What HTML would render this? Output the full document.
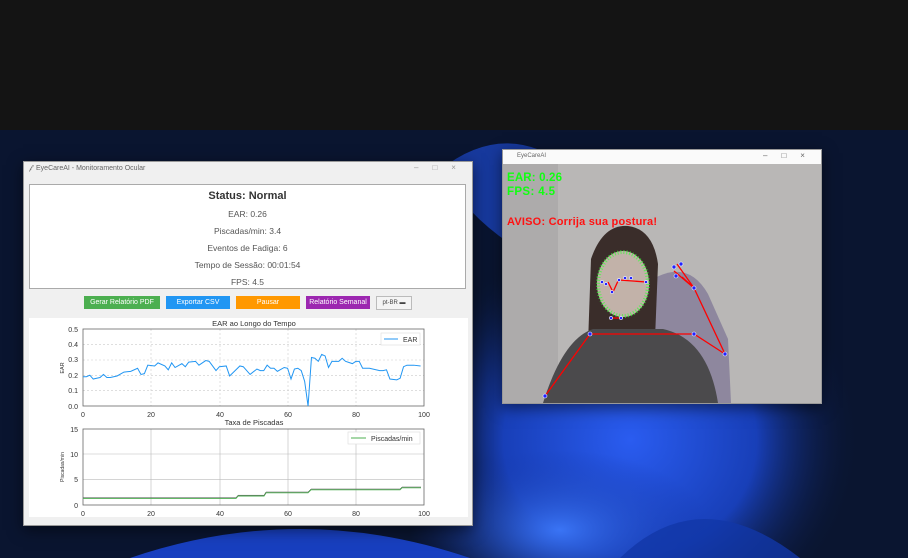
<!DOCTYPE html>
<html><head><meta charset="utf-8"><style>
html,body{margin:0;width:908px;height:558px;overflow:hidden}
body{background:#0a1633;font-family:"Liberation Sans",sans-serif;position:relative}
.abs{position:absolute}
.win{position:absolute;background:#f0f0f0;border:1px solid #999;box-shadow:0 4px 14px rgba(0,0,0,.5);box-sizing:border-box}
.tb{font-size:7px;color:#666}
.info{position:absolute;left:5px;top:22px;width:437px;height:105px;background:#fff;border:1px solid #aaa;text-align:center;color:#555;font-size:8.5px;box-sizing:border-box}
.info div{position:absolute;left:0;right:0}
.btn{position:absolute;top:134px;height:13px;color:#fff;font-size:7px;text-align:center;line-height:13px}
</style></head><body>
<div class="abs" style="left:0;top:0;width:908px;height:130px;background:#141414"></div>
<svg class="abs" style="left:0;top:130px" width="908" height="428">
<defs>
<radialGradient id="g1" cx="50%" cy="50%" r="50%"><stop offset="0" stop-color="#2a5cf0"/><stop offset=".55" stop-color="#183fb8"/><stop offset="1" stop-color="#0a1633" stop-opacity="0"/></radialGradient>
<radialGradient id="g2" cx="50%" cy="50%" r="50%"><stop offset="0" stop-color="#3a74f5"/><stop offset="1" stop-color="#1436a8" stop-opacity="0"/></radialGradient>
</defs>
<rect width="908" height="428" fill="#0a1530"/>
<ellipse cx="630" cy="310" rx="230" ry="210" fill="url(#g1)"/>
<ellipse cx="560" cy="400" rx="150" ry="80" fill="url(#g2)"/>
<path d="M440 40 Q490 0 540 20 L520 120 Q470 90 440 40Z" fill="#1c48cc" opacity=".7"/>
<path d="M130 428 Q300 370 470 428Z" fill="#1a44cf" opacity=".9"/>
<path d="M620 428 Q700 350 800 428Z" fill="#1237a8" opacity=".8"/>
</svg>

<!-- camera window -->
<div class="win" style="left:502px;top:149px;width:320px;height:255px;background:#fafafa">
<div class="tb abs" style="left:14px;top:3px;font-size:6px">EyeCareAI</div>
<div class="tb abs" style="left:260px;top:1px;font-size:8px;letter-spacing:14px">–□×</div>
<svg class="abs" style="left:0;top:14px" width="318" height="239">
<rect width="318" height="239" fill="#b9b7b6"/>
<rect x="0" y="0" width="55" height="239" fill="#adabab"/>
<path d="M150 115 Q185 95 205 130 L225 175 L228 239 L150 239 Z" fill="#8e879e"/>
<path d="M88 95 Q100 60 125 62 Q150 65 155 100 L152 175 L85 180 Z" fill="#3a2d2a"/>
<ellipse cx="120" cy="120" rx="26" ry="33" fill="#c2b2a9"/>
<ellipse cx="120" cy="120" rx="25" ry="32" fill="none" stroke="#3f3" stroke-width="4" stroke-dasharray="1 2" opacity=".7"/>
<path d="M40 239 Q60 175 90 165 L160 165 Q205 175 215 239Z" fill="#4b4a4c"/>
<g stroke="#f00" stroke-width="1.3" fill="none">
<path d="M42 232 L87 170 L191 170 L222 190 L191 124 L171 107 M191 124 L179 113 M191 124 L174 100"/>
<path d="M105 118 L110 128 L115 117 M108 154 L118 154 M116 116 L143 118"/>
</g>
<g fill="#22f" stroke="#fff" stroke-width=".6">
<circle cx="42" cy="232" r="2"/><circle cx="87" cy="170" r="2"/><circle cx="191" cy="170" r="2"/><circle cx="222" cy="190" r="2"/><circle cx="191" cy="124" r="2"/><circle cx="171" cy="103" r="2"/><circle cx="178" cy="100" r="2"/><circle cx="173" cy="112" r="2"/>
<circle cx="99" cy="118" r="1.6"/><circle cx="103" cy="120" r="1.6"/><circle cx="109" cy="128" r="1.6"/><circle cx="116" cy="116" r="1.6"/><circle cx="122" cy="114" r="1.6"/><circle cx="128" cy="114" r="1.6"/><circle cx="143" cy="118" r="1.6"/><circle cx="108" cy="154" r="1.6"/><circle cx="118" cy="154" r="1.6"/>
</g>
<g font-family="Liberation Sans Narrow,Liberation Sans,sans-serif" font-weight="bold">
<text x="4" y="17" fill="#1f1" font-size="11.5" textLength="55">EAR: 0.26</text>
<text x="4" y="31" fill="#1f1" font-size="11.5" textLength="48">FPS: 4.5</text>
<text x="4" y="61" fill="#f11" font-size="11" textLength="150">AVISO: Corrija sua postura!</text>
</g>
</svg>
</div>

<!-- main window -->
<div class="win" style="left:23px;top:161px;width:450px;height:365px">
<div class="tb abs" style="left:5px;top:3px">𝒻 &nbsp;EyeCareAI - Monitoramento Ocular</div>
<div class="tb abs" style="left:390px;top:1px;font-size:8px;letter-spacing:14px;color:#999">–□×</div>
<div class="info">
<div style="top:5px;font-size:11px;font-weight:bold;color:#333">Status: Normal</div>
<div style="top:24px">EAR: 0.26</div>
<div style="top:41px">Piscadas/min: 3.4</div>
<div style="top:58px">Eventos de Fadiga: 6</div>
<div style="top:75px">Tempo de Sessão: 00:01:54</div>
<div style="top:92px">FPS: 4.5</div>
</div>
<div class="btn" style="left:60px;width:76px;background:#4caf50">Gerar Relatório PDF</div>
<div class="btn" style="left:142px;width:64px;background:#2196f3">Exportar CSV</div>
<div class="btn" style="left:212px;width:64px;background:#ff9800">Pausar</div>
<div class="btn" style="left:282px;width:64px;background:#9c27b0">Relatório Semanal</div>
<div class="btn" style="left:352px;width:34px;background:#f4f4f4;border:1px solid #bbb;color:#444;height:12px;line-height:12px;font-size:6px">pt-BR ▬</div>
<div class="abs" style="left:5px;top:156px;width:439px;height:199px;background:#fff"></div>
</div>

<svg class="abs" style="left:0;top:0" width="908" height="558" font-family="Liberation Sans,sans-serif" font-size="7" fill="#333">
<text x="254" y="326" text-anchor="middle" font-size="7.5">EAR ao Longo do Tempo</text>
<g stroke="#ccc" stroke-width=".6" stroke-dasharray="2 2">
<path d="M151 329V406M220 329V406M288 329V406M356 329V406M83 344.6H424M83 360H424M83 375.4H424M83 390.6H424"/>
</g>
<rect x="83" y="329" width="341" height="77" fill="none" stroke="#666" stroke-width=".8"/>
<g transform="translate(83,406) scale(3.41,-154)">
<polyline vector-effect="non-scaling-stroke" fill="none" stroke="#2196f3" stroke-width="1" points="0,.19 1,.19 2,.2 3,.175 4,.18 5,.185 6,.205 7,.185 8,.185 10,.195 12,.22 14,.225 16,.245 17,.205 18,.21 19,.265 21,.26 22,.28 24,.26 25,.235 26,.28 27,.25 29,.275 30,.255 31,.285 33,.29 34,.265 36,.295 37,.29 39,.23 40,.255 42,.26 43,.195 46,.26 47,.255 49,.205 51,.24 52,.23 53,.23 54,.265 55,.245 56,.245 57,.225 59,.25 60,.245 61,.175 62,.24 63,.245 64,.23 65,.16 66,0 67,.315 68,.31 69,.29 70,.335 71,.325 72,.25 73,.29 75,.29 76,.31 77,.29 79,.275 80,.29 81,.29 82,.245 84,.245 87,.23 88,.23 89,.235 90,.175 92,.17 93,.18 94,.255 95,.265 97,.265 99,.26"/>
</g>
<rect x="381" y="333" width="39" height="12" fill="#fff" stroke="#ddd" stroke-width=".6"/>
<line x1="384" y1="339" x2="398" y2="339" stroke="#2196f3"/><text x="403" y="342">EAR</text>
<g text-anchor="end"><text x="78" y="332">0.5</text><text x="78" y="347">0.4</text><text x="78" y="362">0.3</text><text x="78" y="378">0.2</text><text x="78" y="393">0.1</text><text x="78" y="409">0.0</text></g>
<g text-anchor="middle"><text x="83" y="417">0</text><text x="151" y="417">20</text><text x="220" y="417">40</text><text x="288" y="417">60</text><text x="356" y="417">80</text><text x="424" y="417">100</text></g>
<text x="64" y="368" font-size="5.5" transform="rotate(-90 64 368)" text-anchor="middle">EAR</text>
<text x="254" y="425" text-anchor="middle" font-size="7.5">Taxa de Piscadas</text>
<g stroke="#bbb" stroke-width=".6">
<path d="M151 429V505M220 429V505M288 429V505M356 429V505M83 454H424M83 479.6H424"/>
</g>
<rect x="83" y="429" width="341" height="76" fill="none" stroke="#666" stroke-width=".8"/>
<polyline fill="none" stroke="#4caf50" stroke-width="1" points="83,498.4 236,498.4 238,496 264,496 266,492.8 308,492.8 311,489.8 400,489.8 402,487.8 421,487.8"/>
<polyline fill="none" stroke="#555" stroke-width=".5" points="83,497.6 236,497.6 238,495.2 264,495.2 266,492 308,492 311,489 400,489 402,487 421,487"/>
<rect x="348" y="432" width="72" height="12" fill="#fff" stroke="#ddd" stroke-width=".6"/>
<line x1="351" y1="438" x2="366" y2="438" stroke="#4caf50"/><text x="371" y="441">Piscadas/min</text>
<g text-anchor="end"><text x="78" y="432">15</text><text x="78" y="457">10</text><text x="78" y="482">5</text><text x="78" y="508">0</text></g>
<g text-anchor="middle"><text x="83" y="516">0</text><text x="151" y="516">20</text><text x="220" y="516">40</text><text x="288" y="516">60</text><text x="356" y="516">80</text><text x="424" y="516">100</text></g>
<text x="64" y="467" font-size="5" transform="rotate(-90 64 467)" text-anchor="middle">Piscadas/min</text>
</svg>
</body></html>
